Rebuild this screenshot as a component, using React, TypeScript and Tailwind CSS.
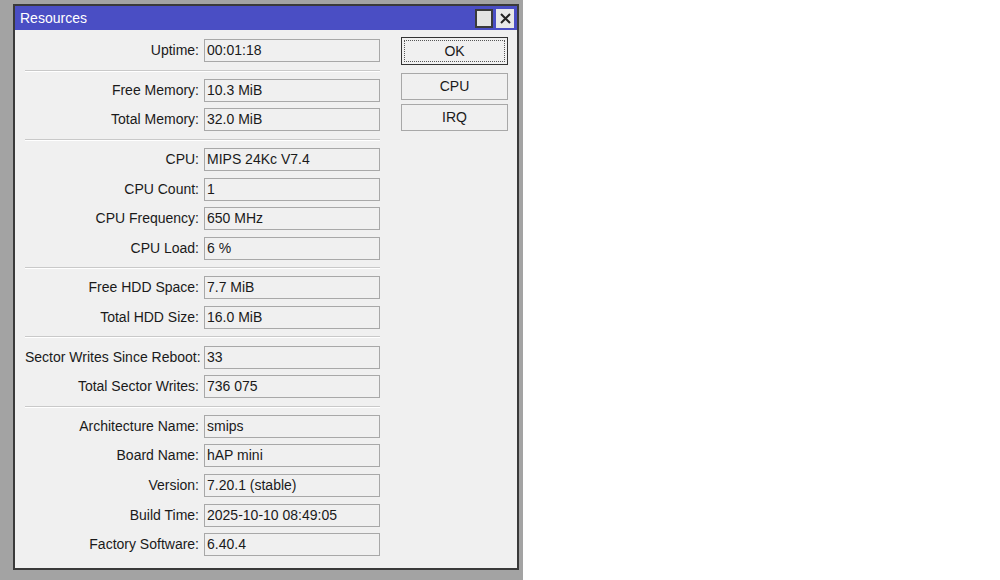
import React from "react";

type Item = { label: string; value: string } | "sep";

const items: Item[] = [
  { label: "Uptime:", value: "00:01:18" },
  "sep",
  { label: "Free Memory:", value: "10.3 MiB" },
  { label: "Total Memory:", value: "32.0 MiB" },
  "sep",
  { label: "CPU:", value: "MIPS 24Kc V7.4" },
  { label: "CPU Count:", value: "1" },
  { label: "CPU Frequency:", value: "650 MHz" },
  { label: "CPU Load:", value: "6 %" },
  "sep",
  { label: "Free HDD Space:", value: "7.7 MiB" },
  { label: "Total HDD Size:", value: "16.0 MiB" },
  "sep",
  { label: "Sector Writes Since Reboot:", value: "33" },
  { label: "Total Sector Writes:", value: "736 075" },
  "sep",
  { label: "Architecture Name:", value: "smips" },
  { label: "Board Name:", value: "hAP mini" },
  { label: "Version:", value: "7.20.1 (stable)" },
  { label: "Build Time:", value: "2025-10-10 08:49:05" },
  { label: "Factory Software:", value: "6.40.4" },
];

export default function App() {
  return (
    <div
      className="w-[1000px] h-[580px] bg-white flex text-[14px] text-[#1a1a1a]"
      style={{ fontFamily: '"Liberation Sans", Arial, sans-serif' }}
    >
      <div className="w-[523px] h-full bg-[#a3a3a3] pt-[4px] pl-[13px]">
        <div className="w-[506px] h-[566px] border-2 border-[#3a3a3a] bg-[#f0f0f0] flex flex-col">
          {/* Title bar */}
          <div className="h-[24px] bg-[#4a4ec4] flex items-center pl-[5px] pr-[3px] shrink-0">
            <span className="text-white text-[14px] leading-none">Resources</span>
            <div className="ml-auto flex items-center gap-[3px]">
              <div className="w-[18px] h-[19px] bg-[#e4e4e4] border-2 border-[#3a3a3a]" />
              <div className="w-[18px] h-[19px] bg-[#e8e8e8] flex items-center justify-center">
                <svg width="11" height="11" viewBox="0 0 11 11">
                  <path d="M1 1 L10 10 M10 1 L1 10" stroke="#222" strokeWidth="2" />
                </svg>
              </div>
            </div>
          </div>
          {/* Body */}
          <div className="flex pl-[10px] pt-[6px]">
            <div className="flex flex-col w-[355px]">
              {items.map((it, i) =>
                it === "sep" ? (
                  <div key={i} className="h-[10px] flex items-center">
                    <div className="w-full border-t border-[#c9c9c9] border-b border-b-white" />
                  </div>
                ) : (
                  <div key={i} className="h-[29.6px] flex items-center">
                    <div className="w-[174px] text-right whitespace-nowrap">{it.label}</div>
                    <div className="ml-[5px] w-[176px] h-[23px] border border-[#a8a8a8] flex items-center pl-[2px] whitespace-nowrap">
                      {it.value}
                    </div>
                  </div>
                )
              )}
            </div>
            <div className="ml-[21px] flex flex-col pt-[1px]">
              <div className="w-[107px] h-[28px] border border-[#333] bg-[#f0f0f0] p-[2px]">
                <div className="w-full h-full border border-dotted border-[#555] flex items-center justify-center">
                  OK
                </div>
              </div>
              <div className="mt-[8px] w-[107px] h-[27px] border border-[#a8a8a8] bg-[#f0f0f0] flex items-center justify-center">
                CPU
              </div>
              <div className="mt-[4px] w-[107px] h-[27px] border border-[#a8a8a8] bg-[#f0f0f0] flex items-center justify-center">
                IRQ
              </div>
            </div>
          </div>
        </div>
      </div>
    </div>
  );
}
